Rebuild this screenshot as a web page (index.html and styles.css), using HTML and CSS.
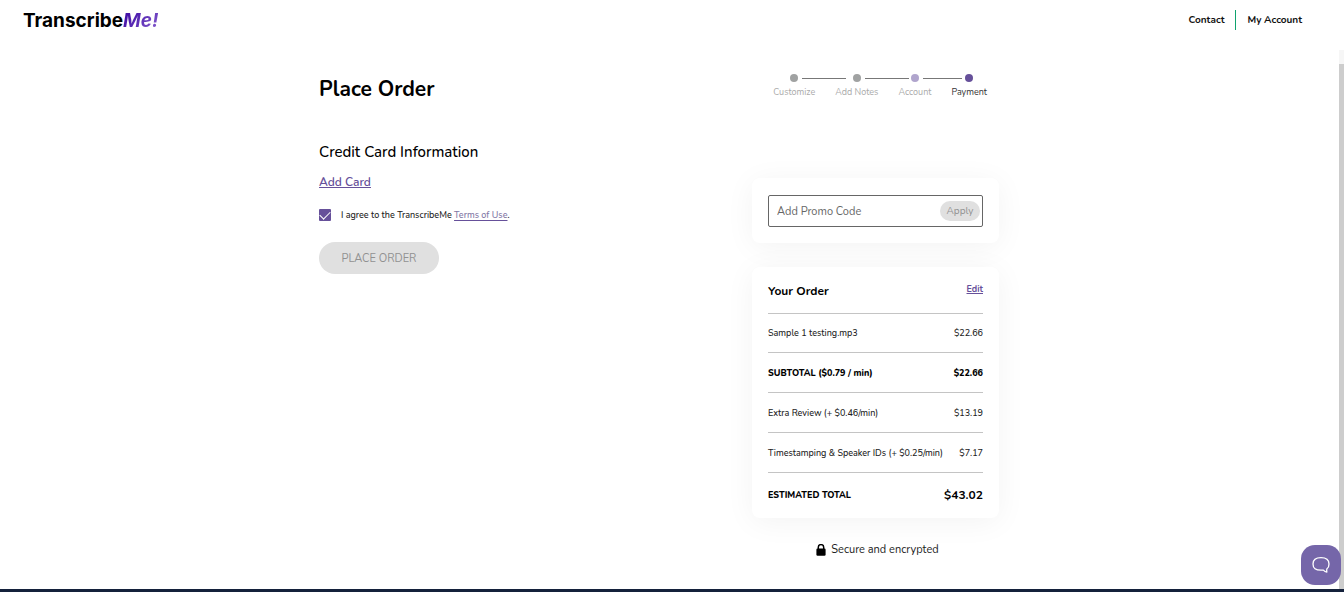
FILE: index.html
```html
<!DOCTYPE html>
<html lang="en">
<head>
<meta charset="utf-8">
<meta name="viewport" content="width=device-width, initial-scale=1">
<title>Place Order</title>
<link rel="stylesheet" href="styles.css">
</head>
<body>
<header class="topbar">
  <a class="logo" href="#">Transcribe<em>Me!</em></a>
  <nav class="topnav">
    <a href="#">Contact</a>
    <a href="#">My Account</a>
  </nav>
</header>
<div class="viewport">
  <main class="page">
    <section class="payment">
      <h1>Place Order</h1>
      <h2>Credit Card Information</h2>
      <a class="add-card" href="#">Add Card</a>
      <div class="agree">
        <input id="agree" type="checkbox" checked>
        <label for="agree">I agree to the TranscribeMe <a href="#">Terms of Use</a>.</label>
      </div>
      <button class="place" type="button" disabled>PLACE ORDER</button>
    </section>
    <aside class="summary">
      <ol class="steps">
        <li>Customize</li>
        <li>Add Notes</li>
        <li class="previous">Account</li>
        <li class="current">Payment</li>
      </ol>
      <form class="card promo">
        <div class="promo-box">
          <input type="text" aria-label="Add Promo Code" placeholder="Add Promo Code">
          <button type="button" disabled>Apply</button>
        </div>
      </form>
      <section class="card order">
        <div class="order-head">
          <h3>Your Order</h3>
          <a href="#">Edit</a>
        </div>
        <table>
          <tbody>
            <tr><td>Sample 1 testing.mp3</td><td>$22.66</td></tr>
            <tr class="subtotal"><td>SUBTOTAL ($0.79 / min)</td><td>$22.66</td></tr>
            <tr class="addon"><td>Extra Review (+ $0.46/min)</td><td>$13.19</td></tr>
            <tr class="addon"><td>Timestamping &amp; Speaker IDs (+ $0.25/min)</td><td>$7.17</td></tr>
            <tr class="total"><td>ESTIMATED TOTAL</td><td>$43.02</td></tr>
          </tbody>
        </table>
      </section>
      <p class="secure">
        <svg width="10" height="12" viewBox="0 0 10 12" aria-hidden="true"><path d="M2.3 5V3.3a2.7 2.7 0 0 1 5.4 0V5" fill="none" stroke="#000" stroke-width="1.5"/><rect x="0.4" y="4.6" width="9.2" height="7.2" rx="1.2"/></svg>
        Secure and encrypted
      </p>
    </aside>
  </main>
  <div class="scroll-track"><div class="scroll-thumb"></div></div>
</div>
<footer class="edge"></footer>
<button class="chat" type="button" aria-label="Open chat">
  <svg width="20" height="20" viewBox="0 0 20 20" aria-hidden="true"><path d="M10 2.600c-5.400 0-8 2-8 6.300s2.600 6.300 8 6.300c.9 0 1.700 0 2.400-.1.900 1 2 1.700 3.500 2.100-.3-1-.3-2-.1-3.100 1.500-1.100 2.200-2.800 2.200-5.200 0-4.300-2.600-6.300-8-6.300Z" fill="none" stroke="#fff" stroke-width="1.300" stroke-linejoin="round"/></svg>
</button>
</body>
</html>
```

FILE: styles.css
```css
* { box-sizing: border-box; }
body {
  margin: 0;
  min-height: 100vh;
  display: flex;
  flex-direction: column;
  background: #fff;
  color: #222;
  font: 10px/16px Nunito, Lato, sans-serif;
}
h1, h2, h3, p, ol { margin: 0; padding: 0; font-weight: 600; }
button, input { font-family: inherit; }
.topbar {
  height: 50px;
  padding: 0 42px 10px 23px;
  display: flex;
  align-items: center;
  justify-content: space-between;
}
.logo {
  padding-top: 2px;
  color: #000;
  font: 700 19px/24px Inter, sans-serif;
  text-decoration: none;
}
.logo em {
  background: linear-gradient(135deg, #4412a8 20%, #8a62d0);
  background-clip: text;
  color: transparent;
}
.topnav { display: flex; }
.topnav a {
  color: #111;
  font-weight: 700;
  line-height: 20px;
  text-decoration: none;
}
.topnav a + a {
  margin-left: 11px;
  padding-left: 11px;
  border-left: 1px solid #10a36e;
}
.viewport { flex: 1; display: flex; }
.page {
  flex: 1;
  display: grid;
  grid-template-columns: minmax(0, 433px) 247px;
  justify-content: center;
  padding: 22px 21px 0 0;
}
.payment {
  display: flex;
  flex-direction: column;
  align-items: flex-start;
}
h1 { color: #000; font-size: 21px; line-height: 34px; font-weight: 700; }
h2 { margin-top: 34px; color: #000; font-size: 15px; line-height: 24px; font-weight: 500; }
.add-card {
  margin-top: 10px;
  color: #66509a;
  font-size: 12px;
  font-weight: 600;
  text-underline-offset: 1px;
}
.agree {
  display: flex;
  align-items: center;
  gap: 10px;
  margin-top: 17px;
  font-size: 9px;
  font-weight: 500;
}
.agree input {
  appearance: none;
  width: 12px;
  height: 12px;
  margin: 0;
  display: flex;
  align-items: center;
  justify-content: center;
  border-radius: 1px;
  background: #66509a;
}
.agree input:checked::before {
  content: "";
  width: 9px;
  height: 5px;
  flex: none;
  border: solid #fff;
  border-width: 0 0 1px 1px;
  transform: translateY(-1px) rotate(-45deg);
}
.agree a { color: #8177a5; text-decoration-color: #66509a; text-underline-offset: 2px; }
.place {
  margin-top: 19px;
  width: 120px;
  height: 32px;
  padding: 0;
  border: 0;
  border-radius: 16px;
  background: #e0e0e0;
  color: #919191;
  font-size: 11px;
}
.steps {
  display: flex;
  gap: 20px;
  margin: 2px 12px 0 0;
  justify-content: flex-end;
  list-style: none;
  color: #aaa;
  font-size: 9px;
  line-height: 12px;
  font-weight: 400;
}
.steps li {
  position: relative;
  display: flex;
  flex-direction: column;
  align-items: center;
  gap: 4px;
}
.steps li::before {
  content: "";
  width: 8px;
  height: 8px;
  border-radius: 50%;
  background: #a0a2a2;
}
.steps li:not(:last-child)::after {
  content: "";
  position: absolute;
  top: 4px;
  left: calc(50% + 8px);
  right: -31px;
  height: 1px;
  background: #777;
}
.steps .previous::before { background: #b0a5cd; }
.steps .current { color: #333; }
.steps .current::before { background: #66509a; }
.card {
  padding: 16px;
  border-radius: 8px;
  background: #fff;
  box-shadow: 0 4px 30px rgba(0, 0, 0, 0.05);
}
.promo { margin-top: 80px; padding-top: 17px; }
.promo-box {
  height: 32px;
  display: flex;
  align-items: center;
  padding: 0 2px 0 8px;
  border: 1px solid #666;
  border-radius: 2px;
}
.promo-box input {
  flex: 1;
  min-width: 0;
  padding: 0;
  border: 0;
  outline: 0;
  background: none;
  font-size: 11px;
}
.promo-box input::placeholder { color: #666; }
.promo-box button {
  width: 40px;
  height: 20px;
  padding: 0;
  border: 0;
  border-radius: 10px;
  background: #e0e0e0;
  color: #919191;
  font-size: 10px;
}
.order { position: relative; margin-top: 24px; padding-bottom: 0; }
.order-head {
  display: flex;
  justify-content: space-between;
  height: 30px;
}
.order-head h3 { color: #000; font-size: 12px; font-weight: 700; }
.order-head a {
  color: #66509a;
  font-size: 9px;
  line-height: 12px;
  font-weight: 700;
  text-underline-offset: 1px;
}
table { width: 100%; border-collapse: collapse; font-size: 9px; font-weight: 500; }
td {
  height: 39px;
  padding: 0;
  border-top: 1px solid #c4c4c4;
  white-space: nowrap;
}
td:last-child { text-align: right; }
.subtotal td, .addon td { height: 40px; }
.subtotal td, .total td { color: #000; font-weight: 800; }
.total td { height: 45px; }
.total td:last-child { font-size: 12px; font-weight: 700; }
.secure {
  display: flex;
  align-items: center;
  justify-content: center;
  gap: 5px;
  margin-top: 24px;
  padding-left: 4px;
  font-size: 11px;
  font-weight: 400;
}
.scroll-track { width: 5px; padding-top: 14px; display: flex; background: #f6f6f6; }
.scroll-thumb { flex: 1; background: #cdcdcd; }
.edge { height: 3px; background: #14213b; }
.chat {
  position: fixed;
  right: 3px;
  bottom: 7px;
  width: 40px;
  height: 40px;
  padding: 0;
  display: grid;
  place-items: center;
  border: 0;
  border-radius: 14px;
  background: #7566a9;
}
```
